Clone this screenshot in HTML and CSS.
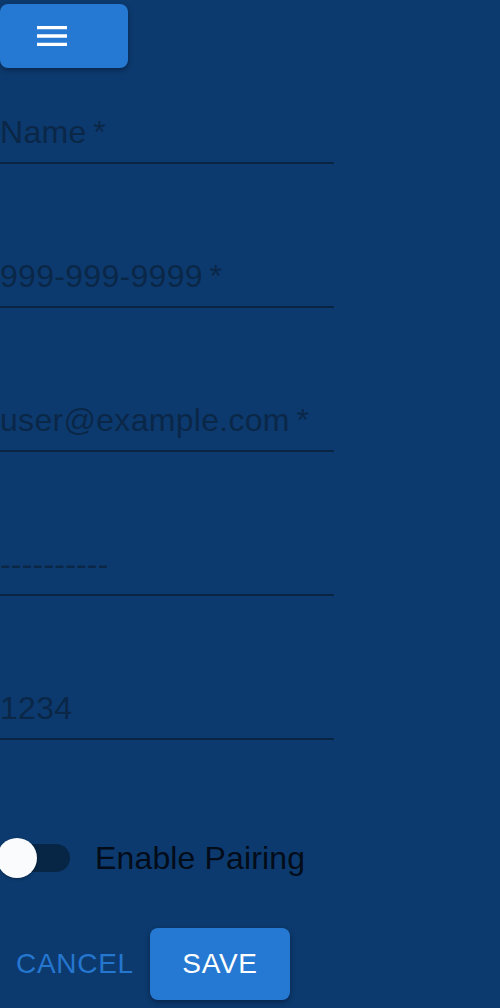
FILE: index.html
```html
<!DOCTYPE html>
<html lang="en">
<head>
<meta charset="utf-8">
<title>Settings</title>
<link rel="stylesheet" href="styles.css">
</head>
<body>
<div class="page">
  <button class="menu-btn" type="button" aria-label="menu">
    <svg class="menu-icon" viewBox="0 0 24 24" width="40" height="40"><path fill="#fff" d="M3 18h18v-2H3v2zm0-5h18v-2H3v2zm0-7v2h18V6H3z"/></svg>
  </button>
  <form class="form">
    <div class="field"><span class="ph">Name</span><span class="req">&thinsp;*</span></div>
    <div class="field"><span class="ph">999-999-9999</span><span class="req">&thinsp;*</span></div>
    <div class="field"><span class="ph">user@example.com</span><span class="req">&thinsp;*</span></div>
    <div class="field"><span class="ph dashes">----------</span></div>
    <div class="field"><span class="ph">1234</span></div>
    <div class="toggle-row">
      <span class="switch"><span class="track"></span><span class="thumb"></span></span>
      <span class="toggle-label">Enable Pairing</span>
    </div>
    <div class="actions">
      <button class="btn-text" type="button">CANCEL</button>
      <button class="btn-save" type="button">SAVE</button>
    </div>
  </form>
</div>
</body>
</html>
```

FILE: styles.css
```css
html, body {
  margin: 0;
  padding: 0;
  background: #0c3a6e;
}
body {
  font-family: "Liberation Sans", Arial, Helvetica, sans-serif;
  width: 500px;
  height: 1008px;
  overflow: hidden;
}
.page {
  padding-top: 4px;
}
.menu-btn {
  display: flex;
  align-items: center;
  width: 128px;
  height: 64px;
  padding: 0 0 0 32px;
  border: 0;
  border-radius: 8px;
  background: #2579d2;
  box-shadow: 0 2px 5px rgba(0, 10, 30, 0.45);
}
.menu-icon {
  display: block;
}
.form {
  display: flex;
  flex-direction: column;
  margin-top: 45px;
}
.field {
  width: 334px;
  font-size: 32px;
  line-height: 38px;
  letter-spacing: 0.3px;
  padding-bottom: 11px;
  border-bottom: 2px solid #0a2444;
  color: #0b2748;
  margin-bottom: 93px;
  white-space: nowrap;
}
.req {
  color: #0b2748;
}
.dashes {
  letter-spacing: 0.2px;
}
.toggle-row {
  display: flex;
  align-items: center;
  gap: 25px;
  height: 40px;
  margin-top: 5px;
}
.switch {
  position: relative;
  display: block;
  width: 70px;
  height: 40px;
}
.track {
  position: absolute;
  left: 0;
  top: 6px;
  width: 70px;
  height: 28px;
  border-radius: 14px;
  background: #072645;
}
.thumb {
  position: absolute;
  left: -3px;
  top: 0;
  width: 40px;
  height: 40px;
  border-radius: 50%;
  background: #fafbfd;
  box-shadow: 0 1px 3px rgba(0, 0, 0, 0.35);
}
.toggle-label {
  font-size: 32px;
  line-height: 38px;
  letter-spacing: 0.15px;
  color: #030c18;
}
.actions {
  display: flex;
  align-items: center;
  margin-top: 50px;
  gap: 0;
}
.btn-text,
.btn-save {
  font-family: "Liberation Sans", Arial, Helvetica, sans-serif;
  font-size: 28px;
  letter-spacing: 0.7px;
  height: 72px;
  border: 0;
  border-radius: 8px;
  cursor: pointer;
}
.btn-text {
  background: transparent;
  color: #2576cf;
  padding: 0 16px;
  width: 150px;
  text-align: left;
}
.btn-save {
  width: 140px;
  background: #2579d2;
  color: #ffffff;
  padding: 0;
  box-shadow: 0 2px 5px rgba(0, 10, 30, 0.45);
}
```
